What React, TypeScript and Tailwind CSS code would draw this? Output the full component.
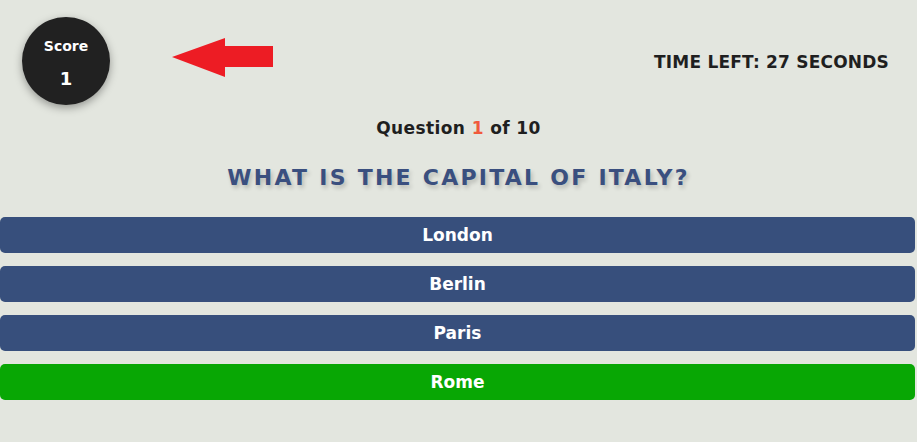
import React from "react";

const options = [
  { label: "London", correct: false },
  { label: "Berlin", correct: false },
  { label: "Paris", correct: false },
  { label: "Rome", correct: true },
];

export default function App() {
  return (
    <div className="min-h-[442px] bg-[#e3e6df] text-[#1f1f1f] font-['DejaVu_Sans','Liberation_Sans',sans-serif]">
      {/* Header */}
      <div className="flex items-center justify-between pl-[22px] pr-[28px] pt-[17px]">
        <div className="flex items-center">
          <div className="flex h-[88px] w-[88px] flex-col items-center justify-center rounded-full bg-[#212121] pt-[4px] text-white shadow-[0_3px_8px_rgba(0,0,0,0.35)]">
            <span className="text-[14px] font-bold leading-none">Score</span>
            <span className="mt-[17px] text-[18px] font-bold leading-none">1</span>
          </div>
          <svg width="102" height="40" viewBox="0 0 102 40" className="ml-[62px] mt-[-7px]">
            <polygon points="0,19 53,0 53,8 101,8 101,29 53,29 53,39" fill="#ed1c24" />
          </svg>
        </div>
        <div className="mt-[3px] text-[17px] font-bold uppercase tracking-[0.2px]">
          Time left: 27 seconds
        </div>
      </div>

      {/* Question counter */}
      <p className="mt-[11px] text-center text-[17px] font-bold tracking-[0.4px]">
        Question <span className="text-[#f05a3c]">1</span> of 10
      </p>

      <h1 className="mt-[19px] text-center text-[22px] font-bold uppercase tracking-[2.25px] text-[#3a4f7f] [text-shadow:2px_3px_4px_rgba(0,0,0,0.2)]">
        What is the capital of Italy?
      </h1>

      {/* Answers */}
      <div className="mt-[23px] flex w-[915px] flex-col gap-[13px]">
        {options.map((opt) => (
          <button
            key={opt.label}
            className={`h-[36px] w-full rounded-[5px] pt-[2px] text-[17px] font-bold text-white ${
              opt.correct ? "bg-[#08a704]" : "bg-[#374f7c]"
            }`}
          >
            {opt.label}
          </button>
        ))}
      </div>
    </div>
  );
}
